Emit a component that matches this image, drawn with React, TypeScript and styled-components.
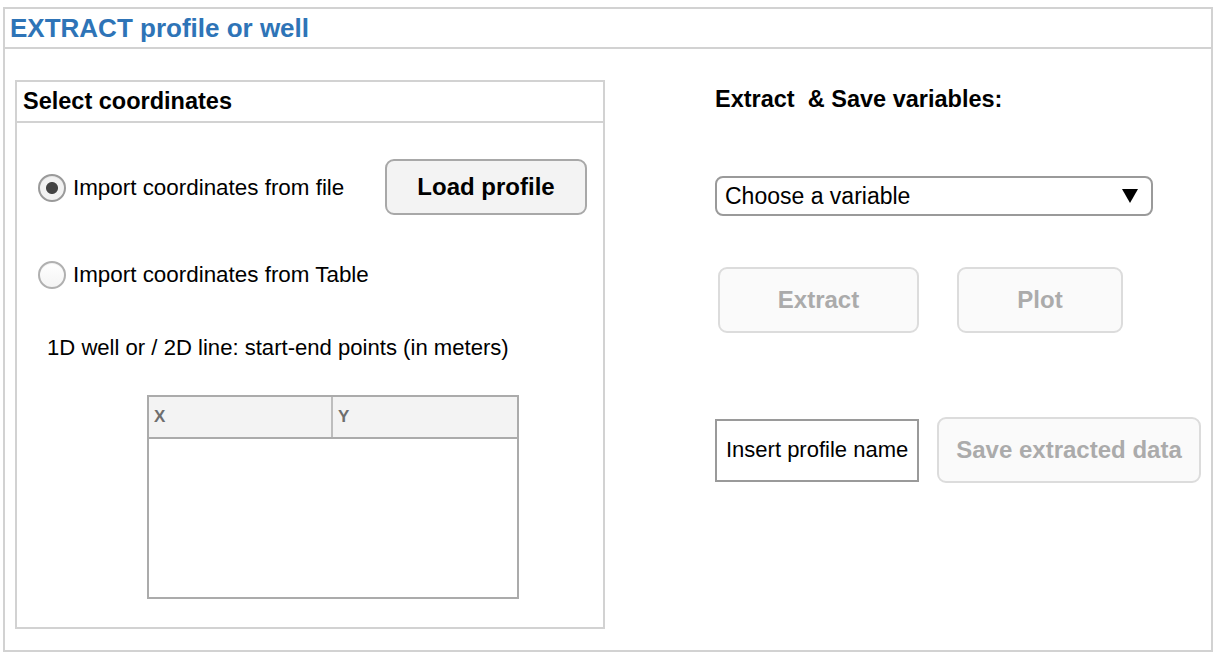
import React from "react";
import styled, { createGlobalStyle } from "styled-components";

const GlobalStyle = createGlobalStyle`
  html, body { margin: 0; padding: 0; background: #fff; }
  body { font-family: "Liberation Sans", Arial, Helvetica, sans-serif; color: #000; }
  * { box-sizing: border-box; }
`;

const Panel = styled.section`
  margin: 7px 0 0 3px;
  width: 1210px;
  height: 645px;
  border: 2px solid #d2d2d2;
  display: flex;
  flex-direction: column;
`;

const PanelHeader = styled.header`
  height: 40px;
  border-bottom: 2px solid #d2d2d2;
  padding-left: 5px;
  display: flex;
  align-items: center;
  font-size: 26px;
  font-weight: bold;
  color: #2e74b7;
`;

const PanelBody = styled.div`
  display: flex;
  padding: 31px 0 0 10px;
  gap: 110px;
`;

const CoordBox = styled.div`
  width: 590px;
  height: 549px;
  border: 2px solid #d2d2d2;
  display: flex;
  flex-direction: column;
`;

const BoxHeader = styled.div`
  height: 41px;
  border-bottom: 2px solid #d2d2d2;
  padding-left: 6px;
  display: flex;
  align-items: center;
  font-size: 23.5px;
  font-weight: bold;
`;

const BoxBody = styled.div`
  display: flex;
  flex-direction: column;
  padding: 36px 16px 0 21px;
`;

const RadioRow = styled.div<{ $top: number }>`
  display: flex;
  align-items: center;
  justify-content: space-between;
  margin-top: ${(p) => p.$top}px;
`;

const RadioLabel = styled.label`
  display: flex;
  align-items: center;
  gap: 7px;
  font-size: 22.4px;
  line-height: 28px;
  padding-top: 2px;
`;

const RadioCircle = styled.span<{ $checked?: boolean }>`
  width: 28px;
  height: 28px;
  border-radius: 50%;
  border: 2px solid ${(p) => (p.$checked ? "#9a9a9a" : "#b0b0b0")};
  background: ${(p) =>
    p.$checked ? "radial-gradient(circle, #444 0 5.5px, #f2f2f2 6.5px)" : "linear-gradient(#fff, #f4f4f4)"};
  box-shadow: inset 0 1px 1px rgba(0, 0, 0, 0.05);
  flex: none;
`;

const LoadButton = styled.button`
  width: 202px;
  height: 56px;
  border: 2px solid #a8a8a8;
  border-radius: 9px;
  background: #f3f3f3;
  font-family: inherit;
  font-size: 24px;
  font-weight: bold;
  color: #000;
  padding: 0;
`;

const Hint = styled.p`
  margin: 46px 0 0 9px;
  font-size: 22.1px;
  line-height: 26px;
`;

const Table = styled.div`
  margin: 34px 0 0 109px;
  width: 372px;
  height: 204px;
  border: 2px solid #ababab;
  display: flex;
  flex-direction: column;
`;

const TableHead = styled.div`
  display: grid;
  grid-template-columns: 184px 1fr;
  height: 42px;
  background: #f3f3f3;
  border-bottom: 2px solid #ababab;
`;

const HeadCell = styled.div<{ $divider?: boolean }>`
  display: flex;
  align-items: center;
  padding-left: 5px;
  font-size: 17px;
  font-weight: bold;
  color: #6e6e6e;
  border-right: ${(p) => (p.$divider ? "2px solid #bdbdbd" : "none")};
`;

const RightColumn = styled.div`
  display: flex;
  flex-direction: column;
  padding-top: 5px;
`;

const SectionTitle = styled.div`
  font-size: 23.5px;
  font-weight: bold;
  line-height: 28px;
  white-space: pre;
`;

const Select = styled.div`
  margin-top: 63px;
  width: 438px;
  height: 40px;
  border: 2px solid #9a9a9a;
  border-radius: 8px;
  display: flex;
  align-items: center;
  justify-content: space-between;
  padding: 0 13px 0 8px;
  font-size: 23px;
`;

const ButtonRow = styled.div<{ $top: number; $gap: number }>`
  display: flex;
  align-items: center;
  margin-top: ${(p) => p.$top}px;
  gap: ${(p) => p.$gap}px;
`;

const DisabledButton = styled.button<{ $w: number; $ml?: number }>`
  width: ${(p) => p.$w}px;
  height: 66px;
  margin-left: ${(p) => p.$ml ?? 0}px;
  border: 2px solid #dcdcdc;
  border-radius: 9px;
  background: #fafafa;
  font-family: inherit;
  font-size: 24px;
  font-weight: bold;
  color: #ababab;
  padding: 0;
`;

const NameInput = styled.div`
  width: 204px;
  height: 63px;
  border: 2px solid #9a9a9a;
  display: flex;
  align-items: center;
  padding-left: 9px;
  font-size: 22px;
`;

const Caret = () => (
  <svg width="16" height="14" viewBox="0 0 16 14">
    <polygon points="0,0 16,0 8,14" fill="#000" />
  </svg>
);

export default function App() {
  return (
    <>
      <GlobalStyle />
      <Panel>
        <PanelHeader>EXTRACT profile or well</PanelHeader>
        <PanelBody>
          <CoordBox>
            <BoxHeader>Select coordinates</BoxHeader>
            <BoxBody>
              <RadioRow $top={0}>
                <RadioLabel>
                  <RadioCircle $checked />
                  Import coordinates from file
                </RadioLabel>
                <LoadButton>Load profile</LoadButton>
              </RadioRow>
              <RadioRow $top={44}>
                <RadioLabel>
                  <RadioCircle />
                  Import coordinates from Table
                </RadioLabel>
              </RadioRow>
              <Hint>1D well or / 2D line: start-end points (in meters)</Hint>
              <Table>
                <TableHead>
                  <HeadCell $divider>X</HeadCell>
                  <HeadCell>Y</HeadCell>
                </TableHead>
              </Table>
            </BoxBody>
          </CoordBox>
          <RightColumn>
            <SectionTitle>{"Extract  & Save variables:"}</SectionTitle>
            <Select>
              <span>Choose a variable</span>
              <Caret />
            </Select>
            <ButtonRow $top={51} $gap={38}>
              <DisabledButton $w={201} $ml={3}>Extract</DisabledButton>
              <DisabledButton $w={166}>Plot</DisabledButton>
            </ButtonRow>
            <ButtonRow $top={84} $gap={18}>
              <NameInput>Insert profile name</NameInput>
              <DisabledButton $w={264}>Save extracted data</DisabledButton>
            </ButtonRow>
          </RightColumn>
        </PanelBody>
      </Panel>
    </>
  );
}
